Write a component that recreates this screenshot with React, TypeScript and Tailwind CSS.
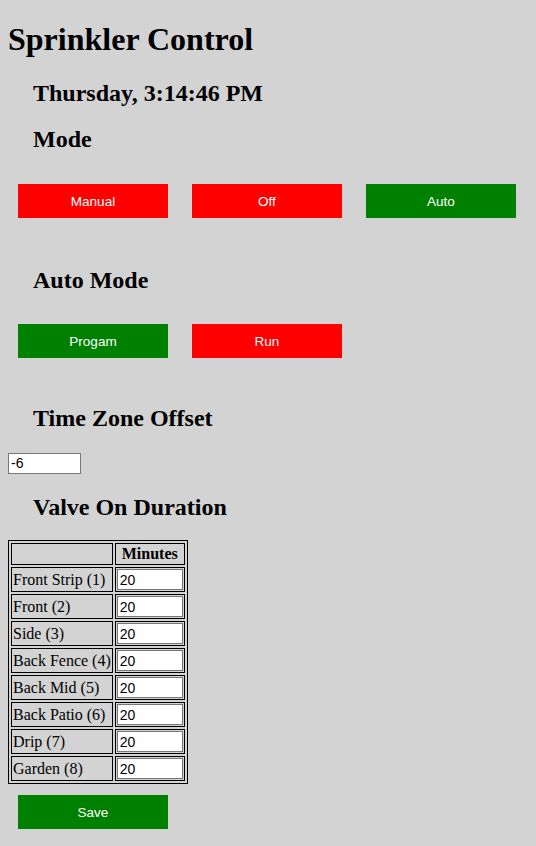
import React from "react";

const serif = { fontFamily: '"Liberation Serif", "Times New Roman", serif' };

function Btn({ label, color }: { label: string; color: "red" | "green" }) {
  return (
    <button
      className={
        "w-[150px] h-[34px] pt-[2px] text-white text-[13.5px] font-['Liberation_Sans',Arial,sans-serif] " +
        (color === "red" ? "bg-[#ff0000]" : "bg-[#008000]")
      }
    >
      {label}
    </button>
  );
}

const valves = [
  "Front Strip (1)",
  "Front (2)",
  "Side (3)",
  "Back Fence (4)",
  "Back Mid (5)",
  "Back Patio (6)",
  "Drip (7)",
  "Garden (8)",
];

export default function App() {
  return (
    <div
      className="flex flex-col items-start bg-[#d3d3d3] min-h-[846px] pl-[8px] text-black"
      style={serif}
    >
      <h1 className="mt-[21px] text-[32px] leading-[37px] font-bold">Sprinkler Control</h1>
      <h2 className="mt-[21px] ml-[25px] text-[24px] leading-[28px] font-bold">Thursday, 3:14:46 PM</h2>
      <h2 className="mt-[18px] ml-[25px] text-[24px] leading-[28px] font-bold">Mode</h2>
      <div className="mt-[31px] ml-[10px] flex gap-[24px]">
        <Btn label="Manual" color="red" />
        <Btn label="Off" color="red" />
        <Btn label="Auto" color="green" />
      </div>
      <h2 className="mt-[48px] ml-[25px] text-[24px] leading-[28px] font-bold">Auto Mode</h2>
      <div className="mt-[30px] ml-[10px] flex gap-[24px]">
        <Btn label="Progam" color="green" />
        <Btn label="Run" color="red" />
      </div>
      <h2 className="mt-[46px] ml-[25px] text-[24px] leading-[28px] font-bold">Time Zone Offset</h2>
      <input
        className="mt-[21px] w-[73px] h-[21px] bg-white border border-[#767676] px-[2px] text-[14px] font-['Liberation_Sans',Arial,sans-serif] outline-none"
        defaultValue="-6"
      />
      <h2 className="mt-[19px] ml-[25px] text-[24px] leading-[28px] font-bold">Valve On Duration</h2>
      <table className="mt-[19px] border border-black border-separate border-spacing-[2px] text-[16px] leading-[18px]">
        <thead>
          <tr>
            <th className="border border-black p-[1px] h-[22px]"></th>
            <th className="border border-black p-[1px] h-[22px] font-bold text-center">Minutes</th>
          </tr>
        </thead>
        <tbody>
          {valves.map((v) => (
            <tr key={v}>
              <td className="border border-black p-[1px] text-left whitespace-nowrap">{v}</td>
              <td className="border border-black p-[1px]">
                <input
                  className="block w-[66px] h-[21px] bg-white border border-[#767676] px-[2px] text-[14px] font-['Liberation_Sans',Arial,sans-serif] outline-none"
                  defaultValue="20"
                />
              </td>
            </tr>
          ))}
        </tbody>
      </table>
      <div className="mt-[11px] ml-[10px]">
        <Btn label="Save" color="green" />
      </div>
    </div>
  );
}
